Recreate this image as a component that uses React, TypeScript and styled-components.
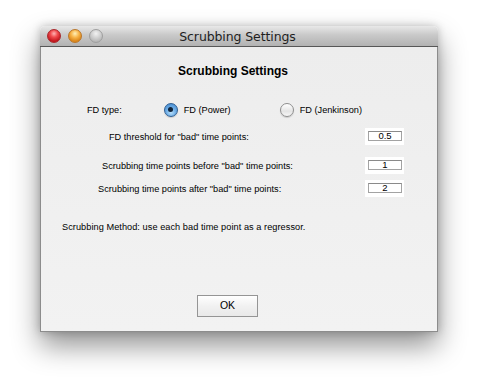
import React from 'react';
import styled, { createGlobalStyle } from 'styled-components';

const GlobalStyle = createGlobalStyle`
  html, body {
    margin: 0;
    padding: 0;
    background: #FFFFFF;
  }
  body {
    font-family: "Liberation Sans", Arial, sans-serif;
  }
`;

const Desktop = styled.div`
  width: 477px;
  height: 386px;
  padding: 26px 0 0 40px;
  box-sizing: border-box;
  background: #FFFFFF;
`;

const Window = styled.div`
  width: 398px;
  height: 306px;
  display: flex;
  flex-direction: column;
  border-radius: 5px 5px 0 0;
  box-shadow: 0 14px 28px rgba(0, 0, 0, 0.42), 0 0 9px rgba(0, 0, 0, 0.22);
  overflow: hidden;
`;

const TitleBar = styled.div`
  height: 20px;
  flex: none;
  display: flex;
  align-items: center;
  position: relative;
  background: linear-gradient(#E8E8E8, #C9C9C9 45%, #B2B2B2);
  border-bottom: 1px solid #575757;
`;

const Lights = styled.div`
  display: flex;
  gap: 7px;
  padding-left: 7px;
`;

const Light = styled.span<{ $color: 'red' | 'orange' | 'gray' }>`
  width: 14px;
  height: 14px;
  border-radius: 50%;
  box-sizing: border-box;
  border: 1px solid ${p => (p.$color === 'red' ? '#A8262A' : p.$color === 'orange' ? '#B8752A' : '#9E9E9E')};
  background: ${p =>
    p.$color === 'red'
      ? 'radial-gradient(circle at 50% 30%, #FFB3B3 0%, #F04B4E 35%, #C1141B 75%, #E24A4A 100%)'
      : p.$color === 'orange'
      ? 'radial-gradient(circle at 50% 30%, #FFF0B8 0%, #F7B245 40%, #D98418 75%, #F3B14B 100%)'
      : 'radial-gradient(circle at 50% 30%, #F2F2F2 0%, #CFCFCF 45%, #B4B4B4 80%, #C8C8C8 100%)'};
`;

const Title = styled.div`
  position: absolute;
  left: 0;
  right: 0;
  text-align: center;
  font-family: "DejaVu Sans", "Liberation Sans", sans-serif;
  font-size: 12.5px;
  color: #1E1E1E;
  letter-spacing: -0.1px;
  padding-right: 3px;
`;

const Content = styled.div`
  flex: 1;
  display: flex;
  flex-direction: column;
  background: linear-gradient(#EDEDED, #F2F2F2);
  border: 1px solid #8C8C8C;
  border-top: none;
  font-size: 9.2px;
  color: #000000;
`;

const Heading = styled.div`
  margin-top: 17px;
  height: 14px;
  line-height: 14px;
  text-align: center;
  padding-right: 12px;
  font-weight: bold;
  font-size: 12px;
`;

const Row = styled.div<{ $top: number; $indent: number }>`
  display: flex;
  align-items: center;
  height: 17px;
  margin-top: ${p => p.$top}px;
  padding-left: ${p => p.$indent}px;
  padding-right: 33px;
`;

const Label = styled.span`
  white-space: nowrap;
`;

const RadioOption = styled.label<{ $left: number }>`
  display: flex;
  align-items: center;
  gap: 6px;
  margin-left: ${p => p.$left}px;
  white-space: nowrap;
`;

const RadioDot = styled.span<{ $checked?: boolean }>`
  width: 14px;
  height: 14px;
  border-radius: 50%;
  box-sizing: border-box;
  display: flex;
  align-items: center;
  justify-content: center;
  border: 1px solid ${p => (p.$checked ? '#2F5F93' : '#8E8E8E')};
  background: ${p =>
    p.$checked
      ? 'radial-gradient(circle at 50% 70%, #B9E0FB 0%, #6FAEE6 45%, #3C83CC 100%)'
      : 'linear-gradient(#FFFFFF, #E4E4E4 60%, #F7F7F7)'};
  box-shadow: 0 1px 1px rgba(0, 0, 0, 0.15);

  &::after {
    content: '';
    display: ${p => (p.$checked ? 'block' : 'none')};
    width: 5px;
    height: 5px;
    border-radius: 50%;
    background: #10233A;
  }
`;

const Field = styled.div`
  margin-left: auto;
  width: 39px;
  height: 17px;
  box-sizing: border-box;
  padding: 3px 2px 4px 3px;
  background: #FFFFFF;
`;

const FieldBox = styled.div`
  height: 10px;
  box-sizing: border-box;
  border: 1px solid #A3A3A3;
  border-top-color: #8A8A8A;
  display: flex;
  align-items: center;
  justify-content: center;
  font-size: 9.5px;
  line-height: 8px;
`;

const Note = styled.div`
  margin-top: 23px;
  padding-left: 21px;
  height: 14px;
  line-height: 14px;
  letter-spacing: 0.05px;
`;

const Footer = styled.div`
  margin-top: auto;
  padding-bottom: 14px;
  display: flex;
  justify-content: center;
  padding-right: 23px;
`;

const Button = styled.button`
  width: 61px;
  height: 22px;
  padding: 0 0 3px;
  border: 1px solid #959595;
  background: linear-gradient(#FFFFFF, #F1F1F1 50%, #E9E9E9);
  font-family: "Liberation Sans", Arial, sans-serif;
  font-size: 10.5px;
  color: #000000;
`;

const params = [
  { label: 'FD threshold for "bad" time points:', value: '0.5', top: 10, indent: 68 },
  { label: 'Scrubbing time points before "bad" time points:', value: '1', top: 12, indent: 61 },
  { label: 'Scrubbing time points after "bad" time points:', value: '2', top: 6, indent: 57 },
];

export default function App() {
  return (
    <Desktop>
      <GlobalStyle />
      <Window>
        <TitleBar>
          <Lights>
            <Light $color="red" />
            <Light $color="orange" />
            <Light $color="gray" />
          </Lights>
          <Title>Scrubbing Settings</Title>
        </TitleBar>
        <Content>
          <Heading>Scrubbing Settings</Heading>
          <Row $top={23} $indent={46}>
            <Label>FD type:</Label>
            <RadioOption $left={42}>
              <RadioDot $checked />
              FD (Power)
            </RadioOption>
            <RadioOption $left={49}>
              <RadioDot />
              FD (Jenkinson)
            </RadioOption>
          </Row>
          {params.map(p => (
            <Row key={p.label} $top={p.top} $indent={p.indent}>
              <Label>{p.label}</Label>
              <Field>
                <FieldBox>{p.value}</FieldBox>
              </Field>
            </Row>
          ))}
          <Note>Scrubbing Method: use each bad time point as a regressor.</Note>
          <Footer>
            <Button>OK</Button>
          </Footer>
        </Content>
      </Window>
    </Desktop>
  );
}
